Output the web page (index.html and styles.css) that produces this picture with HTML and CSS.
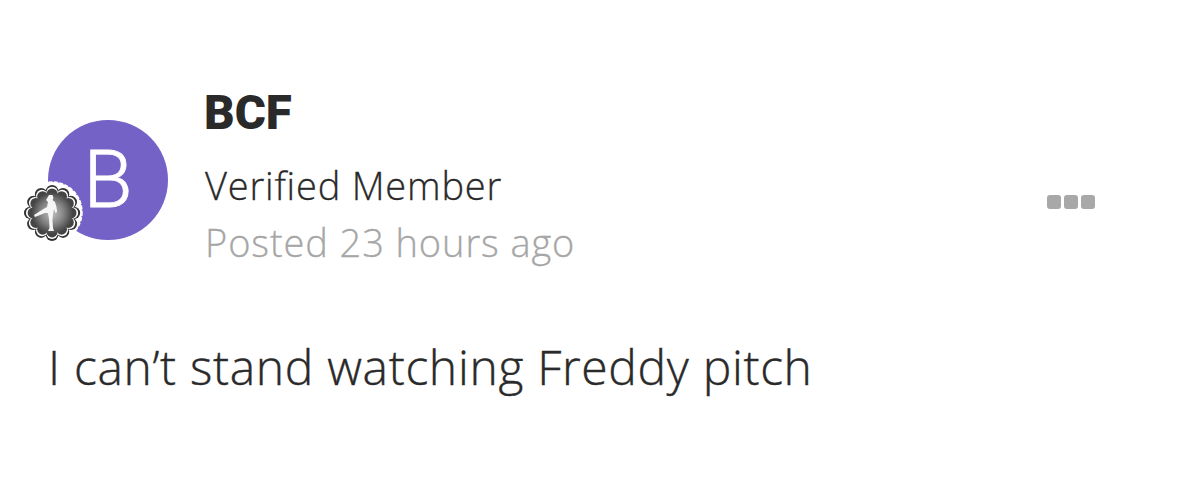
FILE: index.html
```html
<!DOCTYPE html>
<html lang="en">
<head>
<meta charset="utf-8">
<title>Post</title>
<link rel="stylesheet" href="styles.css">
</head>
<body>
<main class="post">
  <header class="post-head">
    <div class="avatar">
      <span class="avatar-letter">B</span>
      <svg class="badge" viewBox="0 0 64 64" width="64" height="64" aria-hidden="true">
        <defs>
          <radialGradient id="badgeFill" gradientUnits="userSpaceOnUse" cx="30" cy="32" r="23">
            <stop offset="0" stop-color="#c0c0c0"/>
            <stop offset="0.55" stop-color="#858585"/>
            <stop offset="1" stop-color="#444"/>
          </radialGradient>
          <g id="scallop">
            <circle cx="30" cy="32" r="21"/>
            <circle cx="30" cy="11" r="6"/><circle cx="40.5" cy="14" r="6"/><circle cx="48" cy="21.5" r="6"/>
            <circle cx="51" cy="32" r="6"/><circle cx="48" cy="42.5" r="6"/><circle cx="40.5" cy="50" r="6"/>
            <circle cx="30" cy="53" r="6"/><circle cx="19.5" cy="50" r="6"/><circle cx="12" cy="42.5" r="6"/>
            <circle cx="9" cy="32" r="6"/><circle cx="12" cy="21.5" r="6"/><circle cx="19.5" cy="14" r="6"/>
          </g>
        </defs>
        <circle class="halo" cx="28" cy="32" r="30"/>
        <g class="badge-shape">
          <use href="#scallop" class="scallop-edge"/>
          <use href="#scallop" class="scallop-dark"/>
          <use href="#scallop" class="scallop-line"/>
          <use href="#scallop" class="scallop-core"/>
        </g>
        <path class="pitcher" d="M25 15l3.500 0 1 3-1 2 2.500 2 1.500 5 .5 5-1.500 1-1.500-4-1 5-.5 6 .5 8 1 3-6 0 1.500-3-.5-9-1-6-3 0-10 4-1-2 9.500-6 3.500-2 1-5-2-2z"/>
      </svg>
    </div>
    <div class="meta">
      <h1 class="name">BCF</h1>
      <p class="role">Verified Member</p>
      <p class="time">Posted 23 hours ago</p>
    </div>
    <div class="more" aria-label="More options"><i></i><i></i><i></i></div>
  </header>
  <p class="body-text">I can’t stand watching Freddy pitch</p>
</main>
</body>
</html>
```
FILE: styles.css
```css
* { box-sizing: border-box; }
html, body { margin: 0; background: #fff; }
body { width: 1179px; height: 494px; overflow: hidden; font-family: "Open Sans", "Liberation Sans", sans-serif; color: #2a2a2a; }
.post { padding: 80px 84px 0 48px; }
.post-head { display: flex; align-items: flex-start; }
.avatar { position: relative; width: 120px; height: 120px; margin-top: 40px; border-radius: 50%; background: #7562c6; display: flex; align-items: center; justify-content: center; flex: none; }
.avatar-letter { color: #fff; font-family: Roboto, sans-serif; font-size: 80px; line-height: 1; font-weight: 300; -webkit-text-stroke: .8px #fff; }
.badge { position: absolute; left: -24px; top: 60px; }
.badge-shape { transform-origin: 28px 33px; transform: translate(-2px, 1px) scale(1.04); }
.halo { fill: #fff; stroke: #fff; stroke-width: 1.500; stroke-dasharray: 4 1.500; }
.scallop-edge { fill: #fff; stroke: #fff; stroke-width: 3; }
.scallop-dark { fill: #333; }
.scallop-line { fill: #fff; transform-origin: 30px 32px; transform: scale(.93); }
.scallop-core { fill: url(#badgeFill); transform-origin: 30px 32px; transform: scale(.87); }
.pitcher { fill: #f6f6f6; }
.meta { margin-left: 37px; flex: 1; }
.name { margin: 0 0 0 -1px; font-family: Roboto, sans-serif; font-weight: 900; font-size: 47.500px; line-height: 66px; }
.role { margin: 14px 0 0; font-size: 38px; font-weight: 300; line-height: 50px; letter-spacing: .8px; -webkit-text-stroke: .3px #2a2a2a; }
.time { margin: 7px 0 0; font-size: 38px; font-weight: 300; line-height: 50px; letter-spacing: .9px; color: #a6a6a6; -webkit-text-stroke: .3px #a6a6a6; }
.more { display: flex; gap: 3px; margin-top: 115px; }
.more i { width: 14px; height: 14px; border-radius: 3px; background: #a8a8a8; }
.body-text { margin: 68px 0 0; font-size: 48px; font-weight: 300; line-height: 64px; letter-spacing: .67px; -webkit-text-stroke: .4px #2a2a2a; }
```
